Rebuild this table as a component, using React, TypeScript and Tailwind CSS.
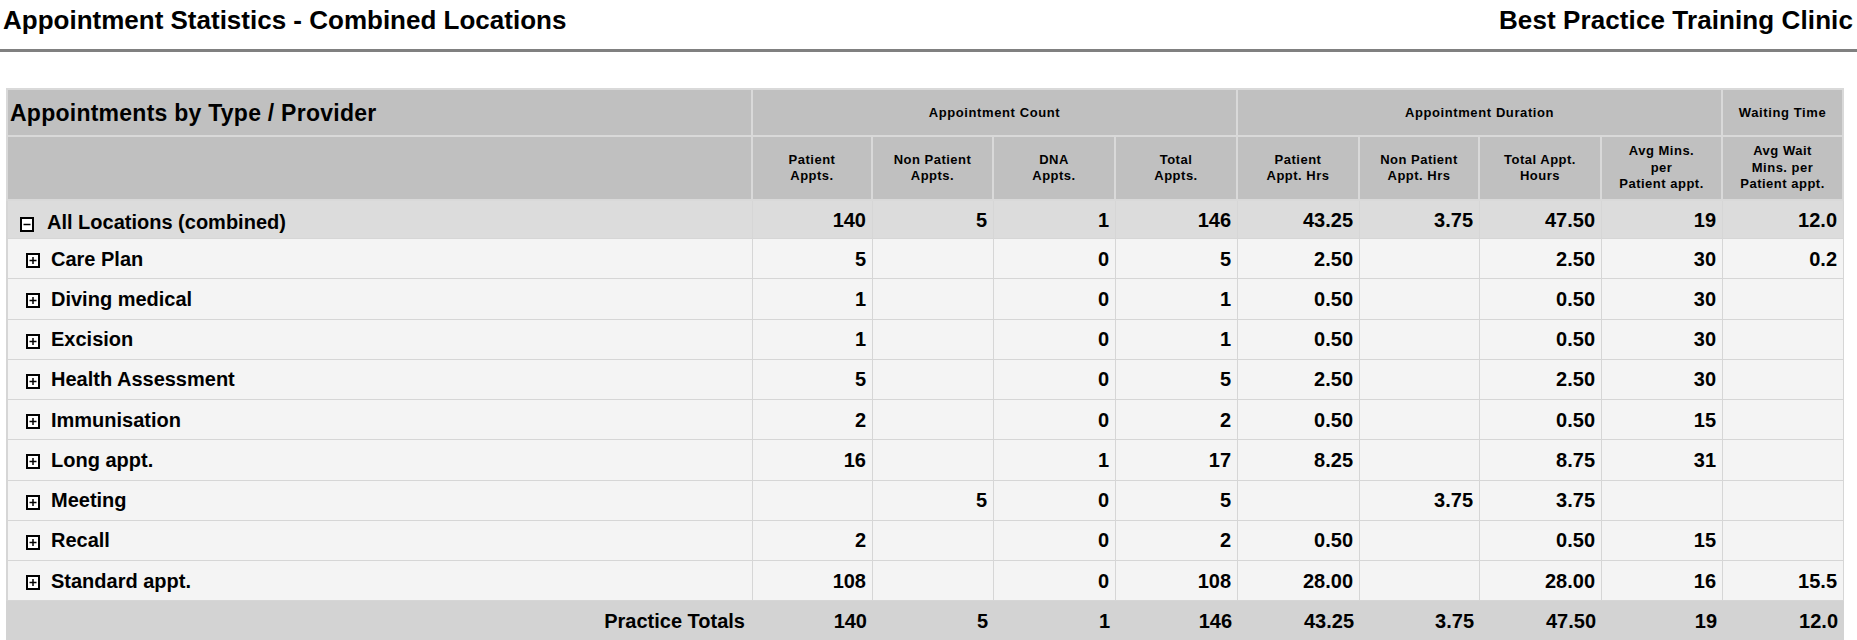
import React from "react"

interface Row {
  name: string
  values: string[]
}

const rows: Row[] = [
  { name: "Care Plan", values: ["5", "", "0", "5", "2.50", "", "2.50", "30", "0.2"] },
  { name: "Diving medical", values: ["1", "", "0", "1", "0.50", "", "0.50", "30", ""] },
  { name: "Excision", values: ["1", "", "0", "1", "0.50", "", "0.50", "30", ""] },
  { name: "Health Assessment", values: ["5", "", "0", "5", "2.50", "", "2.50", "30", ""] },
  { name: "Immunisation", values: ["2", "", "0", "2", "0.50", "", "0.50", "15", ""] },
  { name: "Long appt.", values: ["16", "", "1", "17", "8.25", "", "8.75", "31", ""] },
  { name: "Meeting", values: ["", "5", "0", "5", "", "3.75", "3.75", "", ""] },
  { name: "Recall", values: ["2", "", "0", "2", "0.50", "", "0.50", "15", ""] },
  { name: "Standard appt.", values: ["108", "", "0", "108", "28.00", "", "28.00", "16", "15.5"] },
]

const totals = ["140", "5", "1", "146", "43.25", "3.75", "47.50", "19", "12.0"]

const subHeaders: string[][] = [
  ["Patient", "Appts."],
  ["Non Patient", "Appts."],
  ["DNA", "Appts."],
  ["Total", "Appts."],
  ["Patient", "Appt. Hrs"],
  ["Non Patient", "Appt. Hrs"],
  ["Total Appt.", "Hours"],
  ["Avg Mins.", "per", "Patient appt."],
  ["Avg Wait", "Mins. per", "Patient appt."],
]

// little expand / collapse box like the old report viewer
function ToggleBox({ open }: { open: boolean }) {
  return (
    <svg width="14" height="15" viewBox="0 0 14 15" className="shrink-0 mt-[4px]">
      <rect x="1" y="1" width="12" height="13" fill="white" stroke="black" strokeWidth="2" />
      <line x1="3.5" y1="7.5" x2="10.5" y2="7.5" stroke="black" strokeWidth="1.5" />
      {!open && <line x1="7" y1="4" x2="7" y2="11" stroke="black" strokeWidth="1.5" />}
    </svg>
  )
}

const headCell = "bg-[#c0c0c0] border-r-2 border-b-2 border-[#d9d9d9] font-bold"
const groupCell = `${headCell} border-t-2 text-[13px] tracking-[0.6px] text-center`
const subCell = `${headCell} text-[13px] leading-[16.5px] tracking-[0.5px] text-center`
const numCell = "border-r border-b border-[#d6d6d6] text-right pr-[6px] text-[20px] font-bold"

export default function App() {
  return (
    <div className="w-[1857px] min-h-[640px] bg-white text-black font-['Liberation_Sans',Arial,sans-serif]">
      <div className="h-[52px] flex items-start justify-between pl-[3px] pr-[4px] pt-[5px] border-b-[3px] border-[#808080]">
        <h1 className="text-[26px] leading-[30px] font-bold">Appointment Statistics - Combined Locations</h1>
        <div className="text-[26px] leading-[30px] font-bold tracking-[0.1px]">Best Practice Training Clinic</div>
      </div>

      <div className="pl-[6px] pt-[36px]">
        <table className="table-fixed border-separate border-spacing-0 w-[1838px]">
          <colgroup>
            <col className="w-[747px]" />
            <col className="w-[120px]" />
            <col className="w-[121px]" />
            <col className="w-[122px]" />
            <col className="w-[122px]" />
            <col className="w-[122px]" />
            <col className="w-[120px]" />
            <col className="w-[122px]" />
            <col className="w-[121px]" />
            <col className="w-[121px]" />
          </colgroup>
          <thead>
            <tr>
              <th className={`${headCell} border-t-2 border-l-2 h-[49px] text-left pl-[2px] pt-[2px] text-[23px] tracking-[0.25px]`}>
                Appointments by Type / Provider
              </th>
              <th colSpan={4} className={groupCell}>Appointment Count</th>
              <th colSpan={4} className={groupCell}>Appointment Duration</th>
              <th className={groupCell}>Waiting Time</th>
            </tr>
            <tr>
              <th className={`${headCell} border-l-2 h-[64px]`}></th>
              {subHeaders.map((lines, i) => (
                <th key={i} className={subCell}>
                  {lines.map((l, j) => (
                    <div key={j}>{l}</div>
                  ))}
                </th>
              ))}
            </tr>
          </thead>
          <tbody>
            <tr className="bg-[#dcdcdc]">
              <td className="h-[38px] border-l-2 border-r border-b border-[#d6d6d6] pl-[12px] pt-[5px]">
                <div className="flex items-center gap-[13px] text-[20px] font-bold">
                  <ToggleBox open />
                  <span>All Locations (combined)</span>
                </div>
              </td>
              {totals.map((v, i) => (
                <td key={i} className={numCell}>{v}</td>
              ))}
            </tr>
            {rows.map((row) => (
              <tr key={row.name} className="bg-[#f4f4f4]">
                <td className="h-[40.25px] border-l-2 border-r border-b border-[#d6d6d6] pl-[18px]">
                  <div className="flex items-center gap-[11px] text-[20px] font-bold">
                    <ToggleBox open={false} />
                    <span>{row.name}</span>
                  </div>
                </td>
                {row.values.map((v, i) => (
                  <td key={i} className={numCell}>{v}</td>
                ))}
              </tr>
            ))}
            <tr className="bg-[#d3d3d3]">
              <td className="h-[40px] text-right pr-[8px] text-[20px] font-bold">Practice Totals</td>
              {totals.map((v, i) => (
                <td key={i} className="text-right pr-[6px] text-[20px] font-bold">{v}</td>
              ))}
            </tr>
          </tbody>
        </table>
      </div>
    </div>
  )
}
